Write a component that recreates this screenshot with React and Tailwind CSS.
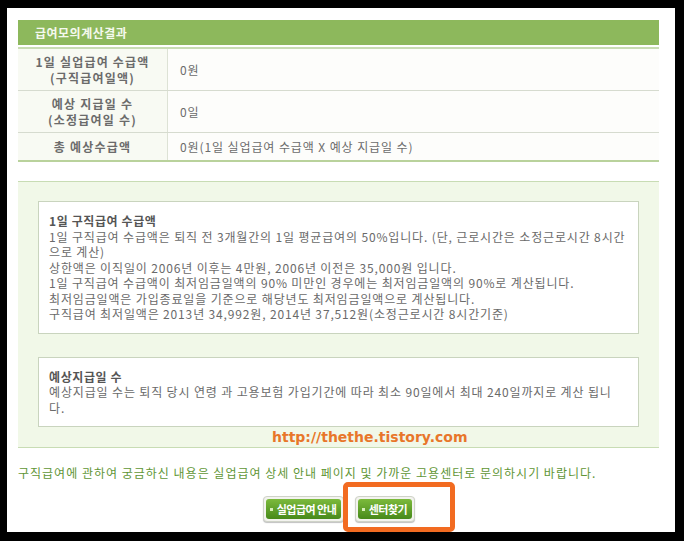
import React from 'react';

const rows = [
  { label: ['1일 실업급여 수급액', '(구직급여일액)'], value: '0원', h: 'h-[42px]' },
  { label: ['예상 지급일 수', '(소정급여일 수)'], value: '0일', h: 'h-[42px]' },
  { label: ['총 예상수급액'], value: '0원(1일 실업급여 수급액 X 예상 지급일 수)', h: 'h-[27px]' },
];

const benefitLines = [
  '1일 구직급여 수급액은 퇴직 전 3개월간의 1일 평균급여의 50%입니다. (단, 근로시간은 소정근로시간 8시간',
  '으로 계산)',
  '상한액은 이직일이 2006년 이후는 4만원, 2006년 이전은 35,000원 입니다.',
  '1일 구직급여 수급액이 최저임금일액의 90% 미만인 경우에는 최저임금일액의 90%로 계산됩니다.',
  '최저임금일액은 가입종료일을 기준으로 해당년도 최저임금일액으로 계산됩니다.',
  '구직급여 최저일액은 2013년 34,992원, 2014년 37,512원(소정근로시간 8시간기준)',
];

const daysLines = [
  '예상지급일 수는 퇴직 당시 연령 과 고용보험 가입기간에 따라 최소 90일에서 최대 240일까지로 계산 됩니',
  '다.',
];

const InfoBox = ({ title, lines }) => (
  <div className="bg-white border border-[#c9d4be] px-[10px] py-[11px] leading-[15.5px] text-[12px] text-[#6a6a6a] tracking-[0.85px]">
    <div className="font-bold text-[#555] tracking-[0.6px]">{title}</div>
    {lines.map((l, i) => (
      <div key={i} className="whitespace-nowrap">{l}</div>
    ))}
  </div>
);

const GreenButton = ({ children, w }) => (
  <div className={`${w} h-[26px] rounded-[4px] border border-[#cfd3c8] bg-[#f3f3ef] p-[2px] shadow-[0_1px_1px_rgba(0,0,0,0.25)]`}>
    <div className="h-full rounded-[3px] bg-gradient-to-b from-[#7cba3c] to-[#478a1a] flex items-center justify-center gap-[4px] text-white text-[11px] font-bold tracking-[-0.5px]">
      <span className="w-[3px] h-[3px] bg-[#d7efb9]" />
      {children}
    </div>
  </div>
);

export default function App() {
  return (
    <div className="w-[684px] h-[541px] bg-black pt-[8px] pl-[7px] font-['Noto_Sans_CJK_KR',sans-serif]">
      <div className="relative w-[668px] h-[524px] bg-white pt-[12px] pl-[11px] pr-[16px]">
        {/* result table */}
        <div className="h-[25px] bg-[#8db85c] flex items-center pl-[17px] text-[12px] font-bold text-[#f5f9ee] tracking-[0.5px]">
          급여모의계산결과
        </div>
        <div className="mt-[2px] h-[2px] bg-[#c9dcb3]" />
        {rows.map((r, i) => (
          <div key={i} className={`flex ${r.h} ${i < rows.length - 1 ? 'border-b border-[#d6dbcf]' : ''}`}>
            <div className="w-[150px] border-r border-[#dde2d5] bg-[#f8faf3] flex flex-col items-center justify-center text-[12px] font-bold text-[#6b6b6b] leading-[16px] tracking-[1.2px]">
              {r.label.map((t) => (
                <div key={t}>{t}</div>
              ))}
            </div>
            <div className="flex-1 bg-[#fdfdfb] flex items-center pl-[12px] text-[12px] text-[#6b6b6b] tracking-[0.9px]">{r.value}</div>
          </div>
        ))}
        <div className="h-[2px] bg-[#b9d29c]" />

        {/* description */}
        <div className="mt-[19px] bg-[#f1f8e8] border-y border-[#c8dcb4] pt-[19px] pb-[20px] px-[20px]">
          <InfoBox title="1일 구직급여 수급액" lines={benefitLines} />
          <div className="mt-[23px]">
            <InfoBox title="예상지급일 수" lines={daysLines} />
          </div>
        </div>

        <p className="mt-[17px] text-[12px] leading-[16px] text-[#5f9636] tracking-[1px] whitespace-nowrap">
          구직급여에 관하여 궁금하신 내용은 실업급여 상세 안내 페이지 및 가까운 고용센터로 문의하시기 바랍니다.
        </p>

        <div className="mt-[15px] flex justify-center gap-[11px]">
          <GreenButton w="w-[81px]">실업급여 안내</GreenButton>
          <GreenButton w="w-[60px]">센터찾기</GreenButton>
        </div>

        {/* watermark */}
        <div className="absolute left-[265px] top-[421px] text-[14px] leading-[17px] font-bold text-[#e8762a] font-['DejaVu_Sans',sans-serif]">
          http://thethe.tistory.com
        </div>

        {/* highlight */}
        <div className="absolute left-[336px] top-[474px] w-[112px] h-[50px] border-[5px] border-[#f26b21] rounded-[5px]" />
      </div>
    </div>
  );
}
